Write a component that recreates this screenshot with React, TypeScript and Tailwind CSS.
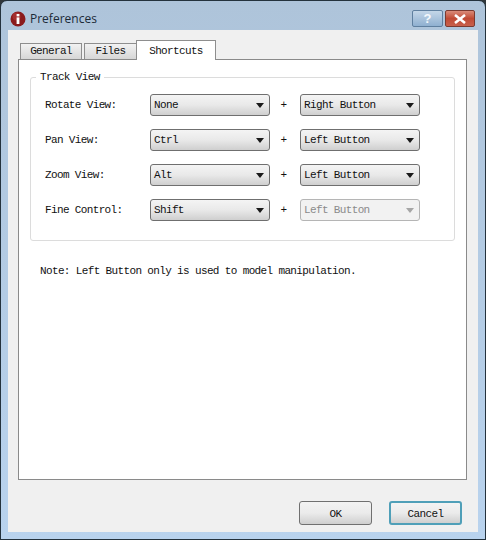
const simsun = "font-['Liberation_Mono',monospace] text-[11px] tracking-[-0.64px] text-[#111111]";

const rows = [
  { label: 'Rotate View:', mod: 'None', button: 'Right Button' },
  { label: 'Pan View:', mod: 'Ctrl', button: 'Left Button' },
  { label: 'Zoom View:', mod: 'Alt', button: 'Left Button' },
  { label: 'Fine Control:', mod: 'Shift', button: 'Left Button', disabled: true },
];

function Arrow({ disabled }: { disabled?: boolean }) {
  return (
    <svg width="8" height="5" viewBox="0 0 8 5" className="shrink-0">
      <path d="M0 0h8L4 5z" fill={disabled ? '#a6a6a6' : '#1a1a1a'} />
    </svg>
  );
}

function Combo({ value, disabled }: { value: string; disabled?: boolean }) {
  return (
    <div
      className={`flex h-[22px] w-[120px] items-center justify-between rounded-[3px] border pl-[3px] pr-[5px] ${
        disabled
          ? 'border-[#b5b5b5] bg-[#f2f2f2]'
          : 'border-[#6f6f6f] bg-gradient-to-b from-[#f4f4f4] via-[#e9e9e9] to-[#cfcfcf]'
      }`}
    >
      <span className={disabled ? simsun + ' pt-[1px] !text-[#8a8a8a]' : simsun + ' pt-[1px]'}>{value}</span>
      <Arrow disabled={disabled} />
    </div>
  );
}

function Tab({ label, width }: { label: string; width: string }) {
  return (
    <div
      className={`flex h-[16px] ${width} items-center justify-center border border-b-0 border-[#8e8e8e] bg-gradient-to-b from-[#f2f2f2] to-[#d6d6d6] ${simsun}`}
    >
      {label}
    </div>
  );
}

function DialogButton({ label, focused }: { label: string; focused?: boolean }) {
  return (
    <div
      className={`flex h-[24px] w-[73px] items-center justify-center rounded-[3px] bg-gradient-to-b from-[#f3f3f3] via-[#ebebeb] to-[#cfcfcf] pt-[2px] ${simsun} ${
        focused ? 'border-2 border-[#4f9fb8]' : 'border border-[#707070]'
      }`}
    >
      {label}
    </div>
  );
}

export default function App() {
  return (
    <div className="h-[540px] w-[486px] overflow-hidden bg-[#30363a]">
      <div className="flex h-full flex-col rounded-t-[7px] border border-[#24323d] bg-gradient-to-b from-[#aec4da] to-[#b9d3ee] px-[7px] pb-[7px]">
        {/* Title bar */}
        <div className="flex h-[29px] shrink-0 items-start">
          <svg width="16" height="16" viewBox="0 0 16 16" className="ml-[2px] mt-[10px] shrink-0">
            <circle cx="8" cy="8" r="7.5" fill="#8a1a1c" />
            <circle cx="6.5" cy="5.5" r="4" fill="#b53a3a" opacity="0.6" />
            <rect x="6.6" y="6.4" width="2.8" height="6.6" fill="#ffffff" />
            <rect x="6.6" y="3" width="2.8" height="2.4" fill="#ffffff" />
          </svg>
          <span className="ml-[4px] mt-[9px] font-['Open_Sans',sans-serif] text-[12px] leading-[18px] text-[#1c2a38]">
            Preferences
          </span>
          <div className="ml-auto mr-[3px] mt-[9px] flex gap-[2px]">
            <div className="flex h-[17px] w-[31px] items-center justify-center rounded-[2px] border border-[#5f7f9f] bg-gradient-to-b from-[#c4d6e8] to-[#8fb0d0] font-['Liberation_Sans',sans-serif] text-[13px] font-bold text-[#f4f8fb]">
              ?
            </div>
            <div className="flex h-[17px] w-[30px] items-center justify-center rounded-[2px] border border-[#7a3a30] bg-gradient-to-b from-[#d98a78] via-[#c04a34] to-[#c8604c]">
              <svg width="14" height="10" viewBox="0 0 14 10">
                <path d="M2 1l10 8M12 1L2 9" stroke="#ffffff" strokeWidth="2.6" />
              </svg>
            </div>
          </div>
        </div>

        {/* Client area */}
        <div className="flex flex-1 flex-col bg-[#f0f0f0] px-[10px] pt-[10px]">
          <div className="flex h-[19px] items-end pl-[2px]">
            <Tab label="General" width="w-[62px]" />
            <div className="w-[2px]" />
            <Tab label="Files" width="w-[53px]" />
            <div className="z-10 -mb-px -ml-px flex h-[20px] w-[80px] items-center justify-center border border-b-0 border-[#8e8e8e] bg-white pt-[2px]">
              <span className={simsun}>Shortcuts</span>
            </div>
          </div>

          <div className="h-[421px] w-[449px] border border-[#8a8a8a] bg-white px-[11px] pt-[11px]">
            <fieldset className="h-[170px] w-[425px] rounded-[3px] border border-[#dcdcdc] pl-[14px]">
              <legend className={`-ml-[9px] px-[4px] leading-[12px] ${simsun}`}>Track View</legend>
              <div className="flex flex-col gap-[13px] pt-[11px]">
                {rows.map((row) => (
                  <div key={row.label} className="flex items-center">
                    <span className={`w-[105px] pt-[1px] ${simsun}`}>{row.label}</span>
                    <Combo value={row.mod} />
                    <span className={`w-[30px] pr-[3px] text-center ${simsun}`}>+</span>
                    <Combo value={row.button} disabled={row.disabled} />
                  </div>
                ))}
              </div>
            </fieldset>
            <p className={`ml-[10px] mt-[22px] ${simsun}`}>
              Note: Left Button only is used to model manipulation.
            </p>
          </div>

          <div className="mt-[21px] flex justify-end gap-[17px] pr-[6px]">
            <DialogButton label="OK" />
            <DialogButton label="Cancel" focused />
          </div>
        </div>
      </div>
    </div>
  );
}
